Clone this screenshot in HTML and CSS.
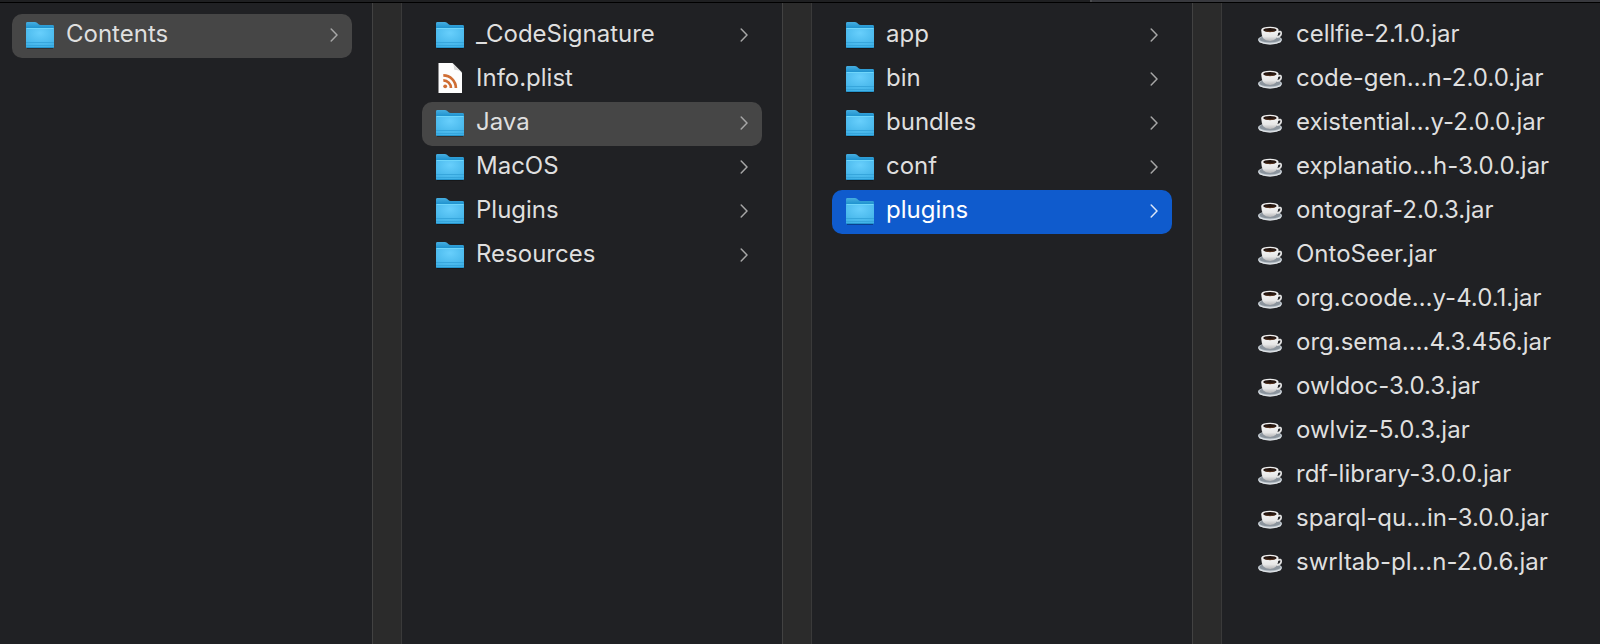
FILE: index.html
```
<!DOCTYPE html>
<html lang="en">
<head>
<meta charset="utf-8">
<title>Contents</title>
<link rel="stylesheet" href="styles.css">
</head>
<body>
<svg class="defs" aria-hidden="true">
  <defs>
    <linearGradient id="folder-back" x1="0" y1="0" x2="0" y2="1">
      <stop offset="0" stop-color="#46aee0"/><stop offset="0.3" stop-color="#1f93cf"/><stop offset="1" stop-color="#1d8cc6"/>
    </linearGradient>
    <radialGradient id="folder-front" cx="0.5" cy="0.25" r="0.8">
      <stop offset="0" stop-color="#68cffc"/><stop offset="1" stop-color="#3eb0e6"/>
    </radialGradient>
    <linearGradient id="cup-body" x1="0" y1="0" x2="0" y2="1">
      <stop offset="0" stop-color="#f6f6f6"/><stop offset="0.6" stop-color="#e6e6e6"/><stop offset="1" stop-color="#b4b4b6"/>
    </linearGradient>
    <symbol id="folder" viewBox="0 0 28 28">
      <path d="M1 26h26v1H1z" fill="#000" opacity=".3"/>
      <path d="M0 1.400Q0 0 1.400 0H8.800Q10 0 11 .8L12.600 2.200Q13.400 3 14.600 3H26.600Q28 3 28 4.400V20H0z" fill="url(#folder-back)"/>
      <path d="M0 6.600Q0 6 .8 6H27.200Q28 6 28 6.600V24.800Q28 26 26.600 26H1.400Q0 26 0 24.800z" fill="url(#folder-front)"/>
      <path d="M.5 6.500h27" stroke="#6fd6fb" stroke-width="1"/>
      <path d="M0 20.500h28M0 23.500h28" stroke="#37a6dc" stroke-width="1"/>
      <path d="M.5 25.500h27" stroke="#2594cc" stroke-width="1"/>
    </symbol>
    <symbol id="plist" viewBox="0 0 28 34">
      <path d="M2.500 0H16.500L26 9.500V30H2.500z" fill="#fdfdfd"/>
      <path d="M16.500 0L26 9.500Q23 6.500 20 7Q17.500 7 18 5Q18.300 2 16.500 0z" fill="#d9d9d9"/>
      <circle cx="9.200" cy="23.300" r="1.900" fill="#cf6d33"/>
      <path d="M7.300 17.400A7.500 7.500 0 0 1 14.900 25M7.300 12.400A12.600 12.600 0 0 1 19.900 25" fill="none" stroke="#cf6d33" stroke-width="2.700"/>
    </symbol>
    <symbol id="cup" viewBox="0 0 28 28">
      <ellipse cx="14" cy="17.800" rx="12" ry="4.500" fill="#c3cbd2"/>
      <ellipse cx="14" cy="17.200" rx="10.600" ry="3.400" fill="#8b949d"/>
      <path d="M3 19.600Q14 24.600 25 19.600" fill="none" stroke="#e4e7ea" stroke-width="1"/>
      <path d="M21.500 10.100Q25.500 8.600 25.200 11.400Q25 14.400 20.800 15.200" fill="none" stroke="#e3e3e3" stroke-width="1.700"/>
      <path d="M5.300 7.800H22.500Q22.500 13.600 20 16.600Q18 19 14 19Q9.500 19 7.500 16.600Q5.300 13.600 5.300 7.800z" fill="url(#cup-body)"/>
      <ellipse cx="13.900" cy="7.800" rx="8.600" ry="3.100" fill="#efefef"/>
      <ellipse cx="13.900" cy="8" rx="6.700" ry="2" fill="#24150f"/>
      <path d="M9.500 9Q14 10.600 18.500 9" fill="none" stroke="#6a4026" stroke-width=".8"/>
    </symbol>
    <symbol id="chevron" viewBox="0 0 8 16">
      <path d="M1.200 1L7 7L1.200 13" fill="none" stroke="currentColor" stroke-width="1.500" stroke-linecap="round" stroke-linejoin="round"/>
    </symbol>
  </defs>
</svg>
<div class="topbar"><span class="topbar-tab"></span></div>
<main class="browser">
  <ul class="column column-first" aria-label="Package">
    <li><button class="row row-open"><svg class="icon"><use href="#folder"/></svg><span class="name">Contents</span><svg class="chevron"><use href="#chevron"/></svg></button></li>
  </ul>
  <div class="divider"></div>
  <ul class="column" aria-label="Contents">
    <li><button class="row"><svg class="icon"><use href="#folder"/></svg><span class="name">_CodeSignature</span><svg class="chevron"><use href="#chevron"/></svg></button></li>
    <li><button class="row"><svg class="icon icon-doc"><use href="#plist"/></svg><span class="name">Info.plist</span></button></li>
    <li><button class="row row-open"><svg class="icon"><use href="#folder"/></svg><span class="name">Java</span><svg class="chevron"><use href="#chevron"/></svg></button></li>
    <li><button class="row"><svg class="icon"><use href="#folder"/></svg><span class="name">MacOS</span><svg class="chevron"><use href="#chevron"/></svg></button></li>
    <li><button class="row"><svg class="icon"><use href="#folder"/></svg><span class="name">Plugins</span><svg class="chevron"><use href="#chevron"/></svg></button></li>
    <li><button class="row"><svg class="icon"><use href="#folder"/></svg><span class="name">Resources</span><svg class="chevron"><use href="#chevron"/></svg></button></li>
  </ul>
  <div class="divider"></div>
  <ul class="column" aria-label="Java">
    <li><button class="row"><svg class="icon"><use href="#folder"/></svg><span class="name">app</span><svg class="chevron"><use href="#chevron"/></svg></button></li>
    <li><button class="row"><svg class="icon"><use href="#folder"/></svg><span class="name">bin</span><svg class="chevron"><use href="#chevron"/></svg></button></li>
    <li><button class="row"><svg class="icon"><use href="#folder"/></svg><span class="name">bundles</span><svg class="chevron"><use href="#chevron"/></svg></button></li>
    <li><button class="row"><svg class="icon"><use href="#folder"/></svg><span class="name">conf</span><svg class="chevron"><use href="#chevron"/></svg></button></li>
    <li><button class="row row-selected"><svg class="icon"><use href="#folder"/></svg><span class="name">plugins</span><svg class="chevron"><use href="#chevron"/></svg></button></li>
  </ul>
  <div class="divider"></div>
  <ul class="column column-last" aria-label="plugins">
    <li><button class="row"><svg class="icon"><use href="#cup"/></svg><span class="name">cellfie-2.1.0.jar</span></button></li>
    <li><button class="row"><svg class="icon"><use href="#cup"/></svg><span class="name">code-gen…n-2.0.0.jar</span></button></li>
    <li><button class="row"><svg class="icon"><use href="#cup"/></svg><span class="name">existential…y-2.0.0.jar</span></button></li>
    <li><button class="row"><svg class="icon"><use href="#cup"/></svg><span class="name">explanatio…h-3.0.0.jar</span></button></li>
    <li><button class="row"><svg class="icon"><use href="#cup"/></svg><span class="name">ontograf-2.0.3.jar</span></button></li>
    <li><button class="row"><svg class="icon"><use href="#cup"/></svg><span class="name">OntoSeer.jar</span></button></li>
    <li><button class="row"><svg class="icon"><use href="#cup"/></svg><span class="name">org.coode…y-4.0.1.jar</span></button></li>
    <li><button class="row"><svg class="icon"><use href="#cup"/></svg><span class="name">org.sema….4.3.456.jar</span></button></li>
    <li><button class="row"><svg class="icon"><use href="#cup"/></svg><span class="name">owldoc-3.0.3.jar</span></button></li>
    <li><button class="row"><svg class="icon"><use href="#cup"/></svg><span class="name">owlviz-5.0.3.jar</span></button></li>
    <li><button class="row"><svg class="icon"><use href="#cup"/></svg><span class="name">rdf-library-3.0.0.jar</span></button></li>
    <li><button class="row"><svg class="icon"><use href="#cup"/></svg><span class="name">sparql-qu…in-3.0.0.jar</span></button></li>
    <li><button class="row"><svg class="icon"><use href="#cup"/></svg><span class="name">swrltab-pl…n-2.0.6.jar</span></button></li>
  </ul>
</main>
</body>
</html>
```
FILE: styles.css
```
* {
  box-sizing: border-box;
}

body {
  margin: 0;
  min-height: 100vh;
  display: flex;
  flex-direction: column;
  background: #202124;
  color: #dfdfdf;
  font-family: Inter, "Liberation Sans", sans-serif;
  font-size: 24px;
  line-height: 28px;
}

.defs {
  position: absolute;
  width: 0;
  height: 0;
}

.topbar {
  display: grid;
  grid-template-columns: 1090fr 510fr;
  height: 3px;
  background: #1f2022;
  border-bottom: 1px solid #000;
}

.topbar-tab {
  grid-column: 2;
  background: #38393e;
  border-left: 2px solid #4c4d50;
}

.browser {
  flex: 1;
  display: grid;
  grid-template-columns: 372fr 30px 380fr 30px 380fr 30px 378fr;
}

.column {
  list-style: none;
  margin: 0;
  padding: 11px 20px;
  min-width: 0;
}

.column-first {
  padding-left: 12px;
}

.column-last {
  padding-right: 0;
}

.divider {
  background: #2b2b2b;
  border-left: 1px solid #424242;
  border-right: 1px solid #3a3a3a;
}

.row {
  display: flex;
  align-items: center;
  width: 100%;
  height: 44px;
  padding: 0 14px;
  border: 0;
  border-radius: 10px;
  background: none;
  color: inherit;
  font: inherit;
  text-align: left;
}

.row-open {
  background: #464646;
}

.row-selected {
  background: #0f5bcd;
  color: #fff;
}

.icon {
  flex: none;
  width: 28px;
  height: 28px;
  margin-right: 12px;
}

.icon-doc {
  height: 34px;
}

.name {
  flex: 1;
  padding-bottom: 4px;
  white-space: nowrap;
}

.chevron {
  flex: none;
  width: 8px;
  height: 16px;
  color: #a6a6a6;
}

.row-selected .chevron {
  color: #dbe7f9;
}
```
